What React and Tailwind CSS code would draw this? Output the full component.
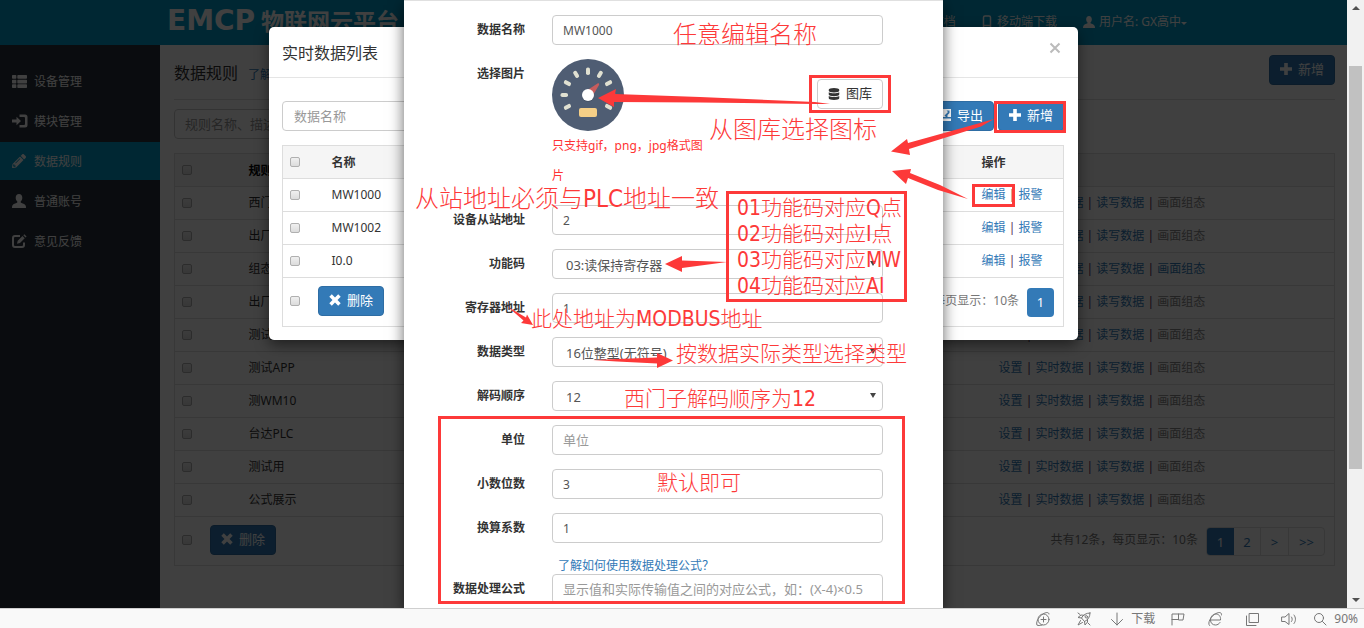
import { FaThList, FaPencilAlt, FaDatabase } from "react-icons/fa";
import { clsx } from "clsx";

function UserIcon({ className }) {
  return (
    <svg viewBox="0 0 14 14" className={className} fill="currentColor">
      <path d="M7 0c2.1 0 3.3 1.6 3.3 3.7 0 1.6-.7 3-1.6 3.8v1.1c1.6.9 4.4 1.5 4.9 3 .3.7.4 1.4.4 2.4H0c0-1 .1-1.700.4-2.400.5-1.500 3.300-2.100 4.900-3V7.500C4.400 6.700 3.700 5.300 3.700 3.700 3.700 1.600 4.900 0 7 0z" />
    </svg>
  );
}

function LoginIcon({ className }) {
  return (
    <svg viewBox="0 0 16 14" className={className} fill="currentColor">
      <path d="M0 5.500h4.500V2.800L9 7l-4.500 4.200V8.500H0z" />
      <path d="M7.500.5H13a2.500 2.500 0 0 1 2.500 2.500v8a2.500 2.500 0 0 1-2.500 2.500H7.500v-2.500H12a1 1 0 0 0 1-1V4a1 1 0 0 0-1-1H7.500z" />
    </svg>
  );
}

function EditIcon({ className }) {
  return (
    <svg viewBox="0 0 15 14" className={className}>
      <path d="M12 8.500V11a2 2 0 0 1-2 2H3a2 2 0 0 1-2-2V4a2 2 0 0 1 2-2h5" fill="none" stroke="currentColor" strokeWidth="2" />
      <path d="M5 9.800l.7-3L10.500 2l2.200 2.200L8 9.100zM11.300 1.200l1-1 2.300 2.200-1.100 1z" fill="currentColor" />
    </svg>
  );
}

function PlusIcon() {
  return (
    <svg viewBox="0 0 12 12" className="size-3" fill="currentColor">
      <path d="M4.200 0h3.600v4.200H12v3.600H7.800V12H4.200V7.800H0V4.200h4.200z" />
    </svg>
  );
}

function CrossIcon() {
  return (
    <svg viewBox="0 0 12 12" className="size-3" fill="currentColor">
      <path d="M2.800.3L6 3.500 9.200.3l2.500 2.500L8.500 6l3.200 3.200-2.500 2.500L6 8.500l-3.200 3.200L.3 9.200 3.500 6 .3 2.800z" />
    </svg>
  );
}

function ExportIcon() {
  return (
    <svg viewBox="0 0 13 12" className="h-3 w-[13px]" fill="currentColor">
      <path d="M1 0h12v8H9.500V6l2-2V1.500H8.500L10 3 6.500 6.500 8 8H1z" />
      <path d="M0 9.500h13V12H0z" />
    </svg>
  );
}

function Checkbox({ label }) {
  return (
    <input
      type="checkbox"
      aria-label={label}
      className="block size-2.5 shrink-0 appearance-none rounded-[2px] border border-[#b0b0b0] bg-linear-to-b from-[#f0f0f0] to-[#dcdcdc]"
    />
  );
}

function PrimaryButton({ children }) {
  return (
    <button
      type="button"
      className="flex h-[30px] shrink-0 items-center gap-1.5 rounded border border-[#2e6da4] bg-[#337ab7] px-2.5 pb-0.5 text-[13px] leading-4 text-white"
    >
      {children}
    </button>
  );
}

function Separator() {
  return <span className="text-[#551a55]"> | </span>;
}

const menu = [
  { name: "设备管理", icon: <FaThList className="size-[15px]" /> },
  { name: "模块管理", icon: <LoginIcon className="h-3.5 w-4" /> },
  { name: "数据规则", icon: <FaPencilAlt className="size-[14px]" />, active: true },
  { name: "普通账号", icon: <UserIcon className="size-3.5" /> },
  { name: "意见反馈", icon: <EditIcon className="h-3.5 w-[15px]" /> },
];

const rules = [
  { name: "西门子" },
  { name: "出厂" },
  { name: "组态", canvas: true },
  { name: "出厂" },
  { name: "测试" },
  { name: "测试APP" },
  { name: "测WM10" },
  { name: "台达PLC" },
  { name: "测试用" },
  { name: "公式展示" },
];

const dataItems = ["MW1000", "MW1002", "I0.0"];

function Header() {
  return (
    <header className="flex h-[45px] shrink-0 items-start justify-between bg-[#009dcc] pr-40 pl-[167px] text-white">
      <div className="flex items-center gap-1.5 pt-[7px]">
        <span className="font-['DejaVu_Sans',sans-serif] text-[28px] leading-7 font-bold">EMCP</span>
        <span className="text-[23px] leading-7 font-bold">物联网云平台</span>
      </div>
      <nav className="flex items-center gap-[26px] pt-3.5 text-xs leading-4">
        <a href="#docs">使用文档</a>
        <a href="#mobile" className="flex items-center gap-[5px]">
          <svg viewBox="0 0 10 14" className="h-3.5 w-2.5" fill="none" stroke="currentColor" strokeWidth="1.500">
            <rect x="1.500" y="1" width="7" height="12" rx="1.500" />
            <path d="M2 10.500h6" />
          </svg>
          移动端下载
        </a>
        <a href="#user" className="flex items-center gap-1">
          <UserIcon className="size-3" />
          用户名: GX高中
          <span className="-ml-1 mt-0.5 h-0 w-0 border-x-3 border-t-3 border-x-transparent border-t-white" />
        </a>
      </nav>
    </header>
  );
}

function Sidebar() {
  return (
    <aside className="w-40 shrink-0 bg-[#29323c] pt-[17px]">
      <ul className="flex flex-col gap-0.5">
        {menu.map((item) => (
          <li key={item.name}>
            <a
              href="#menu"
              className={clsx(
                "flex h-[38px] items-center pl-3 text-xs text-white",
                item.active && "bg-[#009dcc]"
              )}
            >
              <span className="w-[22px]">{item.icon}</span>
              <span className="pt-0.5">{item.name}</span>
            </a>
          </li>
        ))}
      </ul>
    </aside>
  );
}

function RulesPage() {
  return (
    <main className="min-w-0 flex-1 bg-white pt-2.5 pr-3 pl-3.5 text-[#333]">
      <div className="flex h-[45px] items-start justify-between border-b border-[#ddd]">
        <h1 className="flex items-baseline gap-2.5 pt-1.5 text-base">
          数据规则
          <a href="#help" className="text-xs text-[#337ab7]">了解如何使用</a>
        </h1>
        <PrimaryButton>
          <PlusIcon />
          新增
        </PrimaryButton>
      </div>
      <input
        type="text"
        aria-label="规则名称"
        placeholder="规则名称、描述"
        className="mt-[9px] block h-[30px] w-64 rounded border border-[#ccc] px-2.5 text-[13px] placeholder:text-[#999]"
      />
      <table className="mt-3.5 w-full table-fixed border-collapse border border-[#ddd] text-xs leading-4">
        <colgroup>
          <col className="w-[67px]" />
          <col />
          <col className="w-[343px]" />
        </colgroup>
        <thead className="bg-[#f5f5f5]">
          <tr className="h-[33px] border-b border-[#ddd] text-left text-black">
            <th className="px-[7px]">
              <Checkbox label="全选规则" />
            </th>
            <th className="px-[7px] pt-0.5">规则名称</th>
            <th className="px-[7px]" />
          </tr>
        </thead>
        <tbody>
          {rules.map((rule, i) => (
            <tr key={i} className="h-[33px] border-b border-[#ddd]">
              <td className="px-[7px]">
                <Checkbox label={rule.name} />
              </td>
              <td className="px-[7px]">{rule.name}</td>
              <td className="px-[7px] text-[#337ab7]">
                <a href="#set">设置</a>
                <Separator />
                <a href="#live">实时数据</a>
                <Separator />
                <a href="#rw">读写数据</a>
                <Separator />
                <a href="#canvas" className={rule.canvas ? "" : "text-[#888]"}>画面组态</a>
              </td>
            </tr>
          ))}
        </tbody>
        <tfoot>
          <tr className="h-[49px]">
            <td colSpan={3} className="pr-[9px] pb-0.5 pl-[7px]">
              <div className="flex items-center">
                <Checkbox label="选择全部规则" />
                <div className="mr-auto ml-[18px]">
                  <PrimaryButton>
                    <CrossIcon />
                    删除
                  </PrimaryButton>
                </div>
                <span className="mr-2 text-[#777]">共有12条，每页显示：10条</span>
                <nav className="mt-0.5 flex h-[29px] overflow-hidden rounded border border-[#ddd] text-center text-[13px] leading-7 text-[#337ab7]">
                  <a href="#p1" className="w-[27px] bg-[#337ab7] text-white">1</a>
                  <a href="#p2" className="w-[26px]">2</a>
                  <a href="#next" className="w-7 border-l border-[#ddd]">&gt;</a>
                  <a href="#last" className="w-9 border-l border-[#ddd]">&gt;&gt;</a>
                </nav>
              </div>
            </td>
          </tr>
        </tfoot>
      </table>
    </main>
  );
}

function DataListModal() {
  return (
    <section
      role="dialog"
      aria-label="实时数据列表"
      className="absolute inset-x-0 top-[27px] mx-auto w-[809px] rounded-[5px] bg-white text-[#333] shadow-[0_5px_14px_rgba(0,0,0,0.5)]"
    >
      <div className="flex h-[51px] items-center justify-between border-b border-[#e5e5e5] pt-0.5 pr-[17px] pl-[13px]">
        <h2 className="text-base">实时数据列表</h2>
        <button type="button" aria-label="关闭" className="pb-2.5 text-[#bbb]">
          <svg viewBox="0 0 12 12" className="size-3" fill="none" stroke="currentColor" strokeWidth="2">
            <path d="M1.500 1.500l9 9M10.500 1.500l-9 9" />
          </svg>
        </button>
      </div>
      <div className="pt-[23px] pr-3.5 pb-[13px] pl-[13px]">
        <div className="flex items-center gap-1">
          <input
            type="text"
            aria-label="数据名称"
            placeholder="数据名称"
            className="mr-auto h-[30px] w-64 rounded border border-[#ccc] px-[11px] text-[13px] placeholder:text-[#999]"
          />
          <PrimaryButton>
            <ExportIcon />
            导出
          </PrimaryButton>
          <PrimaryButton>
            <PlusIcon />
            新增
          </PrimaryButton>
        </div>
        <table className="mt-3.5 w-full table-fixed border-collapse border border-[#ddd] text-xs leading-4">
          <colgroup>
            <col className="w-[42px]" />
            <col />
            <col className="w-[89px]" />
          </colgroup>
          <thead className="bg-[#f5f5f5]">
            <tr className="h-[33px] border-b border-[#ddd] text-left">
              <th className="px-[7px]">
                <Checkbox label="全选数据" />
              </th>
              <th className="px-[7px] pt-0.5">名称</th>
              <th className="px-[7px] pt-0.5">操作</th>
            </tr>
          </thead>
          <tbody>
            {dataItems.map((name) => (
              <tr key={name} className="h-[33px] border-b border-[#ddd]">
                <td className="px-[7px]">
                  <Checkbox label={name} />
                </td>
                <td className="px-[7px]">{name}</td>
                <td className="px-[7px] text-[#337ab7]">
                  <a href="#edit">编辑</a>
                  <Separator />
                  <a href="#alarm">报警</a>
                </td>
              </tr>
            ))}
          </tbody>
          <tfoot>
            <tr className="h-[49px]">
              <td colSpan={3} className="pr-[9px] pb-0.5 pl-[7px]">
                <div className="flex items-center">
                  <Checkbox label="选择全部数据" />
                  <div className="mr-auto ml-[18px]">
                    <PrimaryButton>
                      <CrossIcon />
                      删除
                    </PrimaryButton>
                  </div>
                  <span className="mr-2 text-[#777]">共有3条，每页显示：10条</span>
                  <a href="#p1" className="mt-0.5 w-[27px] rounded bg-[#337ab7] text-center text-[13px] leading-[29px] text-white">
                    1
                  </a>
                </div>
              </td>
            </tr>
          </tfoot>
        </table>
      </div>
    </section>
  );
}

// tick angles of the dial, clockwise from the top
const ticks = [-120, -90, -60, -30, 0, 30, 60, 90, 120];

function Gauge() {
  return (
    <svg viewBox="0 0 72 72" className="size-[72px]">
      <circle cx="36" cy="36" r="36" fill="#4f5d73" />
      {ticks.map((angle) => (
        <rect key={angle} x="34" y="8.500" width="4" height="7.500" rx="1.800" fill="#e0e0d1" transform={`rotate(${angle} 36 36)`} />
      ))}
      <path d="M34 32l11.500-7.500c1.200-.5 2 .3 1.500 1.500L40 38z" fill="#c75c5c" />
      <circle cx="36" cy="37" r="6" fill="#3f4b5d" opacity=".5" />
      <circle cx="36" cy="36" r="6" fill="#fff" />
      <rect x="27" y="49" width="18" height="9" rx="2" fill="#f5cf87" />
    </svg>
  );
}

function Field({ id, label, children }) {
  return (
    <div className="flex items-start gap-[27px]">
      <label htmlFor={id} className="flex h-[30px] w-[121px] shrink-0 items-center justify-end text-xs font-bold">
        {label}
      </label>
      <div className="min-w-0 flex-1">{children}</div>
    </div>
  );
}

function TextField({ id, label, ...props }) {
  return (
    <Field id={id} label={label}>
      <input
        id={id}
        type="text"
        className="block h-[30px] w-full rounded border border-[#ccc] px-2.5 text-xs text-[#555] placeholder:text-[13px] placeholder:text-[#999]"
        {...props}
      />
    </Field>
  );
}

function SelectField({ id, label, value }) {
  return (
    <Field id={id} label={label}>
      <div className="relative">
        <select
          id={id}
          className="block h-[30px] w-full appearance-none rounded border border-[#ccc] bg-white px-[13px] pt-0.5 text-[13px] leading-5 text-[#555]"
        >
          <option>{value}</option>
        </select>
        <span className="pointer-events-none absolute top-3 right-[7px] border-x-3 border-t-5 border-x-transparent border-t-[#444]" />
      </div>
    </Field>
  );
}

function EditModal() {
  return (
    <section
      role="dialog"
      aria-label="编辑数据"
      className="absolute inset-x-0 top-0 mx-auto min-h-full w-[539px] border-t border-[#e0e0e0] bg-white text-[#333] shadow-[0_5px_14px_rgba(0,0,0,0.6)]"
    >
      <form className="flex flex-col gap-3.5 pt-3.5 pr-[60px]">
        <TextField id="name" label="数据名称" defaultValue="MW1000" />
        <Field id="gallery" label="选择图片">
          <div className="flex items-start justify-between">
            <div className="w-[156px]">
              <Gauge />
              <p className="text-xs leading-[30px] text-[#f33]">只支持gif，png，jpg格式图片</p>
            </div>
            <button
              id="gallery"
              type="button"
              className="mt-5 flex h-[30px] items-center gap-1.5 rounded border border-[#ccc] px-2.5 text-[13px]"
            >
              <FaDatabase className="size-3" />
              图库
            </button>
          </div>
        </Field>
        <TextField id="slave" label="设备从站地址" defaultValue="2" />
        <SelectField id="code" label="功能码" value="03:读保持寄存器" />
        <TextField id="register" label="寄存器地址" defaultValue="1" />
        <SelectField id="type" label="数据类型" value="16位整型(无符号)" />
        <SelectField id="order" label="解码顺序" value="12" />
        <TextField id="unit" label="单位" placeholder="单位" />
        <TextField id="digits" label="小数位数" defaultValue="3" />
        <TextField id="factor" label="换算系数" defaultValue="1" />
        <div>
          <a href="#formula" className="ml-[154px] block text-xs leading-[17px] text-[#337ab7]">
            了解如何使用数据处理公式？
          </a>
          <TextField id="formula" label="数据处理公式" placeholder="显示值和实际传输值之间的对应公式，如：(X-4)×0.5" />
        </div>
      </form>
      <Annotations />
    </section>
  );
}

// Red notes drawn on top of the dialogs, placed from the dialog's corner
function Annotations() {
  return (
    <div className="pointer-events-none absolute -top-px left-0 h-[608px] w-full font-['DejaVu_Sans_Condensed','Noto_Sans_CJK_SC',sans-serif] font-light text-[#fd3939]">
      <svg viewBox="404 0 538 608" className="absolute top-0 left-0 h-[608px] w-[538px] overflow-visible">
        <g fill="none" stroke="#fd3939" strokeWidth="3">
          <rect x="810.500" y="76.500" width="79" height="35" />
          <rect x="995.500" y="102.500" width="69" height="29" />
          <rect x="973.500" y="185.500" width="40" height="20" />
          <rect x="727.500" y="192.500" width="178" height="108" />
          <rect x="439.500" y="417.500" width="464" height="185" />
        </g>
        <g fill="#fd3939">
          <path d="M598 98l18-9-1 5 85 3 115 5 15 2h-15l-115-1.500-86-.5v5z" />
          <path d="M891 151.500L907 139l1 4 72-20 14-4-13 7.500L909 149l1 6z" />
          <path d="M892 171l19-2-1 4 30 12 28 14-30-9-30-12-2 6z" />
          <path d="M665 264l17-8v4.500l45 1.500-45 6v4z" />
          <path d="M533 325l-12-2 2.500-2.500L508 307l18 10.500 1-3z" />
          <path d="M673 360.500L657 353v4.500l-40 1.500-24 1 24 1.500 40 2v4.500z" />
        </g>
      </svg>
      <p className="absolute top-[19px] left-[269px] text-2xl leading-8 whitespace-nowrap">任意编辑名称</p>
      <p className="absolute top-[114px] left-[305px] text-2xl leading-8 whitespace-nowrap">从图库选择图标</p>
      <p className="absolute top-[183px] left-[11px] text-2xl leading-8 whitespace-nowrap">从站地址必须与PLC地址一致</p>
      <p className="absolute top-[195px] left-[333px] text-[21px] leading-[26px] whitespace-nowrap">
        01功能码对应Q点
        <br />
        02功能码对应I点
        <br />
        03功能码对应MW
        <br />
        04功能码对应AI
      </p>
      <p className="absolute top-[306px] left-[127px] text-[21px] leading-[26px] whitespace-nowrap">此处地址为MODBUS地址</p>
      <p className="absolute top-[341px] left-[272px] text-[21px] leading-[26px] whitespace-nowrap">按数据实际类型选择类型</p>
      <p className="absolute top-[386px] left-[220px] text-[21px] leading-[26px] whitespace-nowrap">西门子解码顺序为12</p>
      <p className="absolute top-[470px] left-[253px] text-[21px] leading-[26px] whitespace-nowrap">默认即可</p>
    </div>
  );
}

function Scrollbar() {
  return (
    <div className="flex w-[17px] shrink-0 flex-col items-center bg-[#f1f1f1]">
      <span className="mt-1.5 mb-[7px] border-x-4 border-b-4 border-x-transparent border-b-[#505050]" />
      <div className="flex w-[13px] flex-1 flex-col">
        <div className="flex-[49]" />
        <div className="flex-[403] bg-[#c1c1c1]" />
        <div className="flex-[122]" />
      </div>
      <span className="mt-[7px] mb-1.5 border-x-4 border-t-4 border-x-transparent border-t-[#505050]" />
    </div>
  );
}

function StatusIcon({ children }) {
  return (
    <svg
      viewBox="0 0 16 16"
      className="size-4 shrink-0"
      fill="none"
      stroke="currentColor"
      strokeLinecap="round"
      strokeLinejoin="round"
    >
      {children}
    </svg>
  );
}

function StatusBar() {
  return (
    <footer className="flex h-5 shrink-0 items-center justify-end border-t border-[#cfcfcf] bg-[#f9f9f9] pt-px pr-1.5 text-xs text-[#777]">
      <div className="flex items-center gap-[15px]">
        <div className="flex items-center gap-[25px] pr-0.5">
          <StatusIcon>
            <circle cx="8.500" cy="8.500" r="5.500" />
            <path d="M6 8.500h5M8.500 6v5M2 14c-1.500-2 1-8 6-11 3-2 6-2 6 0M2 14c1 1 3 .5 5 0" />
          </StatusIcon>
          <StatusIcon>
            <path d="M14 2c-4 0-7 2-8.500 5L8.500 10.500C12 9 14 6 14 2zM5.500 7L2 6.500 5 4l3 .3M8.500 10.500L9 14l2.500-3V8M4.500 9.500L2 14l4.500-2.500M2 2l2 1.500M14 14l-2-2" />
            <circle cx="10.300" cy="5.800" r="1.200" />
          </StatusIcon>
        </div>
        <a href="#downloads" className="flex items-center gap-1">
          <StatusIcon>
            <path d="M8 2v12M2.500 8.500L8 14l5.500-5.500" />
          </StatusIcon>
          <span className="ml-0.5">下载</span>
        </a>
        <div className="flex items-center gap-[21px]">
          <StatusIcon>
            <path d="M2 14V3h12l-1 6H8.500V3M2 8.500h6.500" />
          </StatusIcon>
          <StatusIcon>
            <path d="M4 9h9.500C14 5 11.500 3 8.800 3 5.500 3 3.500 6 3.500 9s2 5 5 5c2 0 3.500-1 4.500-2.500M2.500 14.500C0 12 4 5 9 2.500c3-1.500 6-1.500 5.500 1.500" />
          </StatusIcon>
          <StatusIcon>
            <path d="M5.500 2.500h9v9h-9zM2.500 5v9.500H12" />
          </StatusIcon>
          <StatusIcon>
            <path d="M1 6h3l4-3.500v11L4 10.500H1zM10.500 6c1 1.200 1 3.300 0 4.500M13 4c2 2.500 2 6 0 8.500" />
          </StatusIcon>
        </div>
        <div className="flex items-center gap-1.5">
          <StatusIcon>
            <circle cx="7" cy="7" r="4.500" />
            <path d="M10.500 10.500L14 14" />
          </StatusIcon>
          <span>90%</span>
        </div>
      </div>
    </footer>
  );
}

export default function App() {
  return (
    <div className="flex h-screen flex-col overflow-hidden font-['Noto_Sans','Noto_Sans_CJK_SC',sans-serif]">
      <div className="flex min-h-0 flex-1">
        <div className="relative flex min-w-0 flex-1 flex-col overflow-hidden">
          <Header />
          <div className="flex min-h-0 flex-1">
            <Sidebar />
            <RulesPage />
          </div>
          <div className="absolute inset-0 bg-black/75" />
          <DataListModal />
          <EditModal />
        </div>
        <Scrollbar />
      </div>
      <StatusBar />
    </div>
  );
}
